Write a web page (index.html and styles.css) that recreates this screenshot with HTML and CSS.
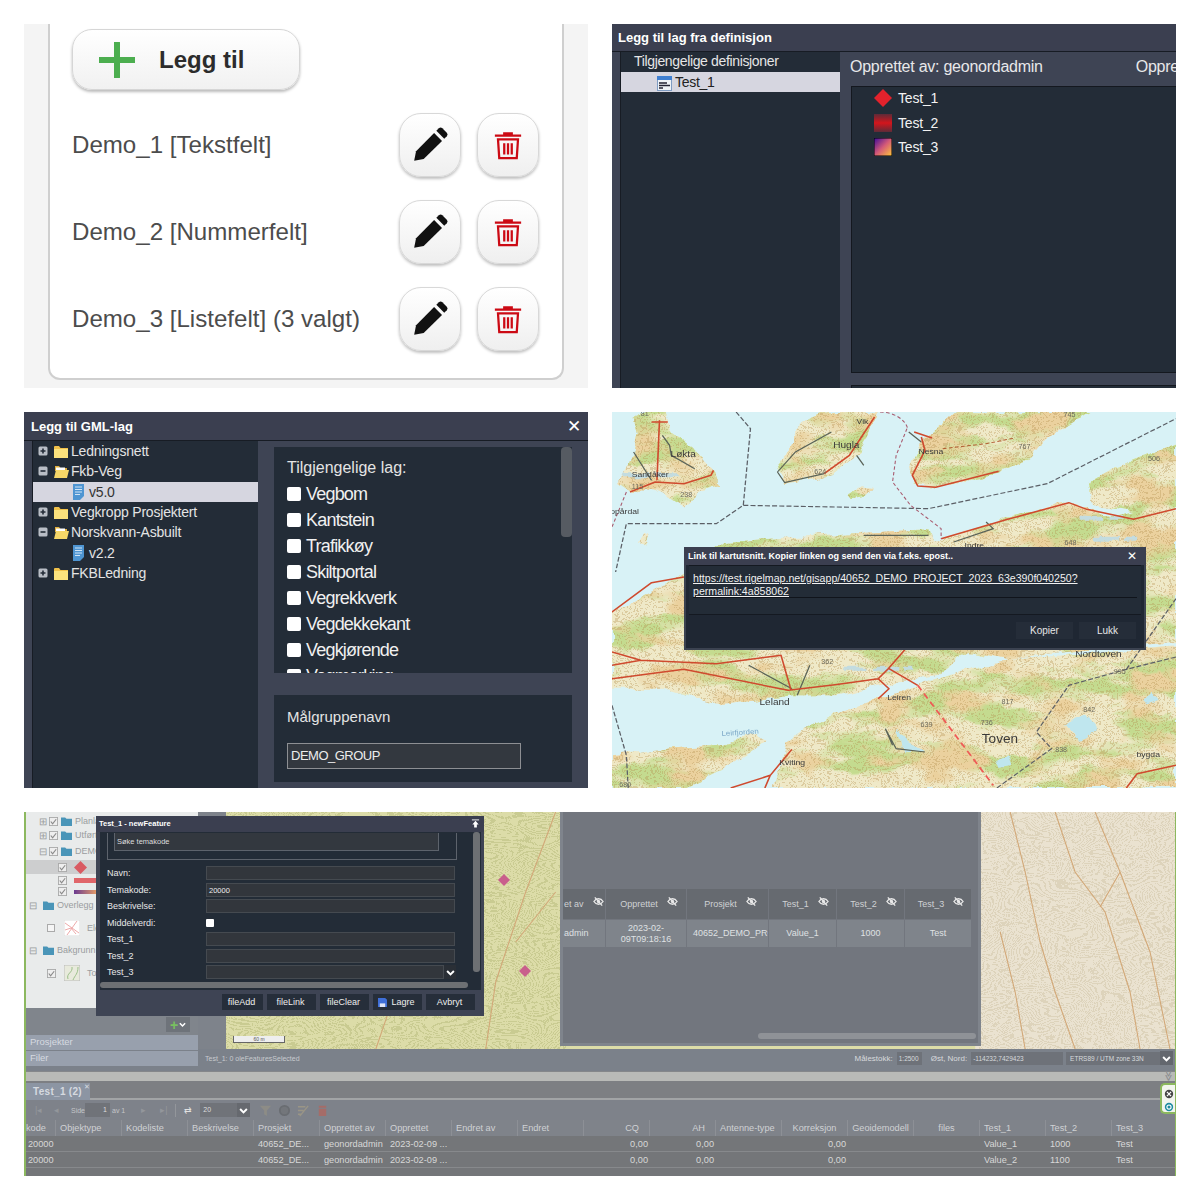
FILE: index.html
```html
<!DOCTYPE html>
<html lang="no">
<head>
<meta charset="utf-8">
<title>Rigelmap</title>
<link rel="stylesheet" href="styles.css">
</head>
<body>
<svg class="defs" aria-hidden="true">
  <symbol id="pencil" viewBox="0 0 24 24"><path d="M2 22l1.200-6L14.600 4.400l5 5L8 20.800z"/><path d="M16 3l1.600-1.600a1.600 1.600 0 0 1 2.200 0l2.800 2.800a1.600 1.600 0 0 1 0 2.200L21 8z"/></symbol>
  <symbol id="trash" viewBox="0 0 24 24"><path d="M1.500 4.500h21M9 4V2.600h6V4M4 7.500h16l-1 15H5zM9 10.500v9M12 10.500v9M15 10.500v9" fill="none" stroke="currentColor" stroke-width="1.800"/></symbol>
  <symbol id="folder" viewBox="0 0 16 16"><path d="M1 4a1 1 0 0 1 1-1h4l1.500 2H15v10H1z" fill="#f0c14a"/><path d="M1 6h14v9H1z" fill="#fbe27d"/></symbol>
  <symbol id="folder-open" viewBox="0 0 16 16"><path d="M2 3h4l1.500 2H14v3H2z" fill="#e0ae3c"/><path d="M3 4.500h9v3H3z" fill="#fff"/><path d="M3 7h13l-2 8H1z" fill="#f6d768"/></symbol>
  <symbol id="doc" viewBox="0 0 12 16"><path d="M0 0h11v12l-4 4H0z" fill="#4e95d2"/><path d="M2 3h7M2 5.500h7M2 8h7M2 10.500h5" stroke="#cfe4f6" stroke-width="1"/></symbol>
  <symbol id="plusbox" viewBox="0 0 10 10"><rect x=".5" y=".5" width="9" height="9" rx="1.500" fill="#b9bec6"/><path d="M2.500 5h5M5 2.500v5" stroke="#232c37" stroke-width="1.600"/></symbol>
  <symbol id="minusbox" viewBox="0 0 10 10"><rect x=".5" y=".5" width="9" height="9" rx="1.500" fill="#b9bec6"/><path d="M2.500 5h5" stroke="#232c37" stroke-width="1.600"/></symbol>
  <symbol id="eyeoff" viewBox="0 0 12 12"><path d="M1 6c2.500-4 7.500-4 10 0-2.500 4-7.500 4-10 0z" fill="none" stroke="#e8e8e8" stroke-width="1.500"/><circle cx="6" cy="6" r="1.800" fill="#e8e8e8"/><path d="M2 1.500l8 9" stroke="#e8e8e8" stroke-width="1.500"/></symbol>
  <symbol id="chev" viewBox="0 0 12 12"><path d="M1.500 4L6 8.500 10.500 4" fill="none" stroke="#fff" stroke-width="2.600"/></symbol>
  <symbol id="tfolder" viewBox="0 0 12 12"><path d="M0 3V1.500h4.500L6 3h6v8H0z" fill="#4a95b8"/></symbol>
  <symbol id="chk" viewBox="0 0 10 10"><rect x=".5" y=".5" width="9" height="9" fill="#eee" stroke="#a9a9a9"/><path d="M2 5l2 2.500L8 2.500" fill="none" stroke="#8a8a8a" stroke-width="1.300"/></symbol>
</svg>

<main class="sheet">

  <section class="shot form-shot">
    <div class="card">
      <button class="add-btn">
        <svg class="add-icon" viewBox="0 0 36 36"><path d="M18 1v34M1 18h34" stroke="#4cae4f" stroke-width="6" stroke-linecap="round"/></svg>
        <span>Legg til</span>
      </button>
      <ul class="field-list">
        <li class="field-row"><span class="field-name">Demo_1 [Tekstfelt]</span><button class="round-btn"><svg class="ic-pencil"><use href="#pencil"/></svg></button><button class="round-btn"><svg class="ic-trash"><use href="#trash"/></svg></button></li>
        <li class="field-row"><span class="field-name">Demo_2 [Nummerfelt]</span><button class="round-btn"><svg class="ic-pencil"><use href="#pencil"/></svg></button><button class="round-btn"><svg class="ic-trash"><use href="#trash"/></svg></button></li>
        <li class="field-row"><span class="field-name">Demo_3 [Listefelt] (3 valgt)</span><button class="round-btn"><svg class="ic-pencil"><use href="#pencil"/></svg></button><button class="round-btn"><svg class="ic-trash"><use href="#trash"/></svg></button></li>
      </ul>
    </div>
  </section>

  <section class="shot dark">
    <header class="titlebar tb-def">Legg til lag fra definisjon</header>
    <div class="def-body">
      <div class="def-tree">
        <div class="def-head">Tilgjengelige definisjoner</div>
        <div class="def-sel">
          <svg class="ic-form" viewBox="0 0 15 15"><rect x=".5" y=".5" width="14" height="14" fill="#eef2f7" stroke="#7f9cc2"/><rect width="15" height="4" fill="#3f7fd0"/><path d="M2 7h8M2 9.500h11M2 12h4" stroke="#223" stroke-width="1.300"/></svg>
          <span>Test_1</span>
        </div>
      </div>
      <div class="def-main">
        <div class="def-meta"><span>Opprettet av: geonordadmin</span><span class="def-meta2">Opprettet</span></div>
        <div class="def-list">
          <div class="def-item"><svg class="swatch" viewBox="0 0 18 18"><path d="M9 0l9 9-9 9-9-9z" fill="#e3222c"/></svg><span>Test_1</span></div>
          <div class="def-item"><svg class="swatch" viewBox="0 0 18 18"><defs><linearGradient id="g2" x2="0" y2="1"><stop offset="0" stop-color="#5d2b38"/><stop offset=".5" stop-color="#d4151c"/><stop offset="1" stop-color="#5d2b38"/></linearGradient></defs><rect width="18" height="18" fill="url(#g2)"/></svg><span>Test_2</span></div>
          <div class="def-item"><svg class="swatch" viewBox="0 0 18 18"><defs><linearGradient id="g3" x2="1" y2="1"><stop offset="0" stop-color="#3a0a9a"/><stop offset=".5" stop-color="#d45a78"/><stop offset="1" stop-color="#ffc83a"/></linearGradient></defs><rect width="18" height="18" fill="url(#g3)" stroke="#000"/></svg><span>Test_3</span></div>
        </div>
        <div class="def-list2"></div>
      </div>
    </div>
  </section>

  <section class="shot dark gml">
    <header class="titlebar tb-gml"><span>Legg til GML-lag</span><span class="close">✕</span></header>
    <div class="gml-body">
      <div class="gml-tree">
        <div class="g-row"><svg class="g-exp"><use href="#plusbox"/></svg><svg class="g-fold"><use href="#folder"/></svg>Ledningsnett</div>
        <div class="g-row"><svg class="g-exp"><use href="#minusbox"/></svg><svg class="g-fold"><use href="#folder-open"/></svg>Fkb-Veg</div>
        <div class="g-row g-leaf g-sel"><svg class="g-doc"><use href="#doc"/></svg>v5.0</div>
        <div class="g-row"><svg class="g-exp"><use href="#plusbox"/></svg><svg class="g-fold"><use href="#folder"/></svg>Vegkropp Prosjektert</div>
        <div class="g-row"><svg class="g-exp"><use href="#minusbox"/></svg><svg class="g-fold"><use href="#folder-open"/></svg>Norskvann-Asbuilt</div>
        <div class="g-row g-leaf"><svg class="g-doc"><use href="#doc"/></svg>v2.2</div>
        <div class="g-row"><svg class="g-exp"><use href="#plusbox"/></svg><svg class="g-fold"><use href="#folder"/></svg>FKBLedning</div>
      </div>
      <div class="gml-right">
        <div class="layers">
          <div class="layers-thumb"></div>
          <div class="layers-title">Tilgjengelige lag:</div>
          <label class="layer"><i class="cb"></i>Vegbom</label>
          <label class="layer"><i class="cb"></i>Kantstein</label>
          <label class="layer"><i class="cb"></i>Trafikkøy</label>
          <label class="layer"><i class="cb"></i>Skiltportal</label>
          <label class="layer"><i class="cb"></i>Vegrekkverk</label>
          <label class="layer"><i class="cb"></i>Vegdekkekant</label>
          <label class="layer"><i class="cb"></i>Vegkjørende</label>
          <label class="layer"><i class="cb"></i>Vegmerking</label>
        </div>
        <div class="target">
          <div class="target-label">Målgruppenavn</div>
          <div class="target-input">DEMO_GROUP</div>
        </div>
      </div>
    </div>
  </section>

  <section class="shot map-shot">
    <svg class="topo" viewBox="0 0 1568 1128" preserveAspectRatio="none">
      <defs>
        <clipPath id="land">
          <path d="M60 20L100 0H150L165 60 225 105 285 175 300 222 240 240 205 285 150 250 110 230 60 240 20 210 45 160 60 120 72 60z"/>
          <path d="M490 120L530 30 600 0H738L720 60 680 130 610 190 480 212 455 170z"/>
          <path d="M830 160L860 90 960 0H1330L1200 85 1160 140 1060 190 900 228 842 212z"/>
          <path d="M655 250L700 220 725 225 700 255 665 262z"/>
          <path d="M72 395L90 362 104 370 95 402z"/>
          <path d="M1320 215L1400 165 1568 95V265L1450 300 1340 280z"/>
          <path d="M920 385L1100 315 1270 272 1400 315 1568 265V690L1300 715 1100 745 990 720 900 790 760 815 630 850 500 850 300 880 140 830 0 830V600L200 490 310 390 600 368 880 352 890 385z"/>
          <path d="M0 1030L130 1012 300 1000 400 968 425 990 300 1080 200 1128H0z"/>
          <path d="M740 860L560 930 485 990 450 1128H1568V700L1300 725 1100 745 900 800z"/>
        </clipPath>
        <filter id="rough" x="0" y="0" width="100%" height="100%"><feTurbulence type="fractalNoise" baseFrequency=".02" numOctaves="4" seed="7"/><feDisplacementMap in="SourceGraphic" scale="26" xChannelSelector="R" yChannelSelector="G"/></filter>
        <filter id="patch-g" x="0" y="0" width="100%" height="100%" color-interpolation-filters="sRGB"><feTurbulence type="fractalNoise" baseFrequency=".005 .014" numOctaves="4" seed="11"/><feColorMatrix values="0 0 0 0 .77  0 0 0 0 .86  0 0 0 0 .56  6 0 0 0 -2.700"/></filter>
        <filter id="patch-t" x="0" y="0" width="100%" height="100%" color-interpolation-filters="sRGB"><feTurbulence type="fractalNoise" baseFrequency=".007 .012" numOctaves="4" seed="23"/><feColorMatrix values="0 0 0 0 .92  0 0 0 0 .82  0 0 0 0 .62  5 0 0 0 -2.500"/></filter>
        <filter id="iso" x="0" y="0" width="100%" height="100%" color-interpolation-filters="sRGB"><feTurbulence type="fractalNoise" baseFrequency=".007 .010" numOctaves="3" seed="5"/><feColorMatrix values="0 0 0 0 .70  0 0 0 0 .55  0 0 0 0 .30  1 0 0 0 0"/><feComponentTransfer><feFuncA type="discrete" tableValues="0 0 0 1 0 0 0 1 0 0 0 1 0 0 0 1 0 0 0 1 0 0 0 1 0 0 0 1 0 0 0 1 0 0 0 1 0 0 0 1 0 0 0 1 0 0 0 1 0 0 0 1 0 0 0 1 0 0 0 1 0 0 0 1 0 0 0 1 0 0 0 1 0 0 0 1 0 0 0 1 0 0 0 1 0 0 0 1 0 0 0 1 0 0 0 1 0 0 0 1 0 0 0 1 0 0 0 1 0 0 0 1 0 0 0 1 0 0 0 1 0 0 0 1 0 0 0 1 0 0 0 1 0 0 0 1 0 0 0 1 0 0 0 1 0 0 0 1 0 0 0 1"/></feComponentTransfer></filter>
      </defs>
      <rect width="1568" height="1128" fill="#d8f2f6"/>
      <g filter="url(#rough)"><g clip-path="url(#land)">
        <rect width="1568" height="1128" fill="#efe9c8"/>
        <rect width="1568" height="1128" filter="url(#patch-g)"/>
        <rect width="1568" height="1128" filter="url(#patch-t)"/>
        <rect width="1568" height="1128" filter="url(#iso)" opacity=".32"/>
        <path d="M1260 940l60-30 30 40-50 40zM790 950l30 40 50 30-60 0zM1070 1040l30-10 10 30-30 5zM1470 860l30-20 20 30-40 10z" fill="#bfe6ee"/>
        <path d="M30 190h160M1300 320h120M480 620l200-40M640 770h200M1340 380h120" stroke="#c3dce0" stroke-width="12" stroke-dasharray="70 16" fill="none"/>
      </g></g>
      <g fill="none" stroke="#5a6358" stroke-width="3.500">
        <path d="M460 180L510 120 610 60M460 180L480 212 590 185M680 130L700 160M825 60L860 90M140 70L160 100 165 130 230 170M60 120L110 205M1040 330L1060 350 950 390M700 370L880 370M550 760L515 850M380 760L500 830M780 1000L760 950 790 1010 870 1020"/>
      </g>
      <g fill="none" stroke="#cf4a2e" stroke-width="4.500" stroke-linejoin="round">
        <path d="M132 25L125 205M50 240L120 210 200 215 275 190 282 175M110 30H155M590 185L660 130 730 15"/>
        <path d="M860 75L870 115 835 190 850 222 900 226 1075 178M840 60L890 78"/>
        <path d="M915 380L1100 322 1270 272 1320 292 1450 322 1568 290"/>
        <path d="M0 600L110 512 200 495M0 720L80 745 290 755 470 730 497 832M0 800L200 772 490 835 620 818 740 800 768 770 825 700M740 800L770 830 740 860M770 770L850 820M0 760L80 745"/>
        <path d="M440 1090L500 1012M330 1128L440 1090 425 1128"/>
        <path d="M1430 1128L1460 1085 1568 1060"/>
      </g>
      <g fill="none" stroke="#5b5f66" stroke-width="3.500" stroke-dasharray="14 6">
        <path d="M345 0L385 50 365 280 290 335H40L10 480M365 280L880 290 1210 215 1568 20"/>
        <path d="M0 880L40 1030 45 1128"/>
        <path d="M1568 735L1430 772 1270 820 1180 960 1222 1010 1070 1128M1430 772L1568 560"/>
      </g>
      <g fill="none" stroke="#a85a6e" stroke-width="3" stroke-dasharray="10 7">
        <path d="M820 50L790 130 780 210 830 280 915 350 915 380M745 0C780 0 815 20 822 50M40 240L0 345"/>
        <path d="M920 110L1040 95 1120 78" stroke="#b05a30"/>
      </g>
      <path d="M850 820L1060 1120" fill="none" stroke="#ef5a56" stroke-width="5" stroke-dasharray="18 12"/>
      <g class="maplabels">
        <text x="680" y="36">Vik</text><text x="615" y="108" class="ml">Hugla</text><text x="163" y="136" class="ml">Løkta</text><text x="55" y="196">Sandåker</text><text x="55" y="231" class="ms">115</text><text x="190" y="256" class="ms">238</text><text x="852" y="126">Nesna</text><text x="1130" y="110" class="ms">767</text><text x="1255" y="16" class="ms">745</text><text x="1490" y="147" class="ms">506</text><text x="562" y="186" class="ms">624</text><text x="-5" y="305">opårdal</text><text x="980" y="408">Indre</text><text x="1258" y="400" class="ms">648</text><text x="582" y="756" class="ms">362</text><text x="1288" y="735" class="ml">Nordtoven</text><text x="1395" y="785" class="ms">995</text><text x="410" y="878" class="ml">Leland</text><text x="765" y="864">Leiren</text><text x="1083" y="877" class="ms">817</text><text x="1310" y="900" class="ms">842</text><text x="858" y="944" class="ms">639</text><text x="1025" y="940" class="ms">736</text><text x="1028" y="992" class="mx">Toven</text><text x="1232" y="1021" class="ms">838</text><text x="1458" y="1034">bygda</text><text x="305" y="972" class="mb" transform="rotate(-4 305 972)">Leirfjorden</text><text x="465" y="1060">Kviting</text><text x="20" y="1126" class="ms">680</text><text x="80" y="12" class="ms">81</text>
      </g>
    </svg>
    <div class="link-dlg">
      <div class="ld-title"><span>Link til kartutsnitt. Kopier linken og send den via f.eks. epost..</span><span class="ld-x">✕</span></div>
      <div class="ld-body">
        <a class="ld-link">https://test.rigelmap.net/gisapp/40652_DEMO_PROJECT_2023_63e390f040250?<br>permalink:4a858062</a>
      </div>
      <div class="ld-foot"><span class="ld-btn">Kopier</span><span class="ld-btn">Lukk</span></div>
    </div>
  </section>

  <section class="shot gis">
    <div class="gis-top">
      <aside class="side">
        <div class="side-tree">
          <div class="t a1"><i class="exp">⊞</i><svg class="ck"><use href="#chk"/></svg><svg class="tf"><use href="#tfolder"/></svg>Planlagt</div>
          <div class="t a2"><i class="exp">⊞</i><svg class="ck"><use href="#chk"/></svg><svg class="tf"><use href="#tfolder"/></svg>Utført</div>
          <div class="t a3"><i class="exp">⊟</i><svg class="ck"><use href="#chk"/></svg><svg class="tf"><use href="#tfolder"/></svg>DEMO</div>
          <div class="t a4 t-sel"><svg class="ck ck2"><use href="#chk"/></svg><svg class="sw" viewBox="0 0 12 12"><path d="M6 0l6 6-6 6-6-6z" fill="#d95a62"/></svg></div>
          <div class="t a5"><svg class="ck ck2"><use href="#chk"/></svg><i class="bar bar-r"></i></div>
          <div class="t a6"><svg class="ck ck2"><use href="#chk"/></svg><i class="bar bar-g"></i></div>
          <div class="t a7"><i class="exp exp0">⊟</i><svg class="tf"><use href="#tfolder"/></svg>Overlegg</div>
          <div class="t a8"><i class="box"></i><svg class="thumb" viewBox="0 0 16 16"><rect width="16" height="16" fill="#fff" stroke="#ddd"/><path d="M1 3l14 10M3 15L13 1M1 10l6-2 5 6" stroke="#eaa" fill="none"/></svg>Elementer</div>
          <div class="t a9"><i class="exp exp0">⊟</i><svg class="tf"><use href="#tfolder"/></svg>Bakgrunn</div>
          <div class="t a10"><svg class="ck ck3"><use href="#chk"/></svg><svg class="thumb" viewBox="0 0 16 16"><rect width="16" height="16" fill="#e8eadc" stroke="#bbb"/><path d="M4 14C2 8 9 8 8 2M9 15c2-5 5-6 5-13" stroke="#9cc08a" fill="none"/></svg>Topo</div>
        </div>
        <div class="side-tool"><span class="add-mini"><b>+</b><svg><use href="#chev"/></svg></span></div>
        <div class="acc">Prosjekter</div>
        <div class="acc">Filer</div>
      </aside>
      <div class="gis-right">
        <div class="gis-stage">
          <div class="gutter"></div>
          <div class="terrain">
            <svg class="terrain-svg" viewBox="0 0 950 237" preserveAspectRatio="none">
              <defs>
                <filter id="iso-a" x="0" y="0" width="100%" height="100%" color-interpolation-filters="sRGB"><feTurbulence type="fractalNoise" baseFrequency=".01 .03" numOctaves="2" seed="9"/><feColorMatrix values="0 0 0 0 .68  0 0 0 0 .70  0 0 0 0 .44  1 0 0 0 0"/><feComponentTransfer><feFuncA type="discrete" tableValues="0 0 1 0 0 1 0 0 1 0 0 1 0 0 1 0 0 1 0 0 1 0 0 1 0 0 1 0 0 1 0 0 1 0 0 1 0 0 1 0 0 1 0 0 1 0 0 1 0 0 1 0 0 1 0 0 1 0 0 1 0 0 1 0 0 1 0 0 1 0 0 1 0 0 1 0 0 1 0 0 1 0 0 1 0 0 1 0 0 1 0 0 1 0 0 1 0 0 1 0 0 1 0 0 1 0 0 1 0 0 1 0 0 1 0 0 1 0 0 1"/></feComponentTransfer></filter>
                <filter id="iso-b" x="0" y="0" width="100%" height="100%" color-interpolation-filters="sRGB"><feTurbulence type="fractalNoise" baseFrequency=".014 .03" numOctaves="2" seed="14"/><feColorMatrix values="0 0 0 0 .80  0 0 0 0 .74  0 0 0 0 .62  1 0 0 0 0"/><feComponentTransfer><feFuncA type="discrete" tableValues="0 0 1 0 0 1 0 0 1 0 0 1 0 0 1 0 0 1 0 0 1 0 0 1 0 0 1 0 0 1 0 0 1 0 0 1 0 0 1 0 0 1 0 0 1 0 0 1 0 0 1 0 0 1 0 0 1 0 0 1 0 0 1 0 0 1 0 0 1 0 0 1 0 0 1 0 0 1 0 0 1 0 0 1 0 0 1 0 0 1 0 0 1 0 0 1 0 0 1 0 0 1 0 0 1 0 0 1 0 0 1 0 0 1 0 0 1 0 0 1"/></feComponentTransfer></filter>
              </defs>
              <rect width="340" height="237" fill="#dcdca8"/>
              <rect width="340" height="237" filter="url(#iso-a)" opacity=".4"/>
              <rect x="750" width="200" height="237" fill="#eae2d0"/>
              <rect x="750" width="200" height="237" filter="url(#iso-b)" opacity=".4"/>
              <g fill="none" stroke="#d2a878" stroke-width="1.100">
                <path d="M250 40L190 120 150 237M330 0L300 80 270 170 260 237M290 130L330 80"/>
                <path d="M785 0L800 60 815 130 830 180 850 237M830 0L850 60 880 100 905 180 915 237M870 0L895 60 925 140 945 237M775 120L790 180 800 237M895 60L875 95"/>
              </g>
            </svg>
            <svg class="pin pin-a" viewBox="0 0 12 12"><path d="M6 0l6 6-6 6-6-6z" fill="#c95f8c"/></svg>
            <svg class="pin pin-b" viewBox="0 0 12 12"><path d="M6 0l6 6-6 6-6-6z" fill="#c95f8c"/></svg>
            <div class="scale">60 m</div>
            <div class="grid-win">
              <div class="gw-table">
                <div class="gw-h gw-c0">et av<svg><use href="#eyeoff"/></svg></div>
                <div class="gw-h">Opprettet<svg><use href="#eyeoff"/></svg></div>
                <div class="gw-h">Prosjekt<svg><use href="#eyeoff"/></svg></div>
                <div class="gw-h">Test_1<svg><use href="#eyeoff"/></svg></div>
                <div class="gw-h">Test_2<svg><use href="#eyeoff"/></svg></div>
                <div class="gw-h">Test_3<svg><use href="#eyeoff"/></svg></div>
                <div class="gw-d gw-c0">admin</div>
                <div class="gw-d">2023-02-<br>09T09:18:16</div>
                <div class="gw-d gw-clip">40652_DEMO_PROJECT</div>
                <div class="gw-d">Value_1</div>
                <div class="gw-d">1000</div>
                <div class="gw-d">Test</div>
              </div>
              <div class="gw-scroll"></div>
            </div>
          </div>
        </div>
        <div class="status">
          <span class="st-left">Test_1: 0 oleFeaturesSelected</span>
          <span class="st-lbl">Målestokk:</span><span class="st-in st-w1">1:2500</span>
          <span class="st-lbl st-gap">Øst, Nord:</span><span class="st-in st-w2">-114232,7429423</span>
          <span class="st-in st-w3">ETRS89 / UTM zone 33N</span><span class="st-chev"><svg><use href="#chev"/></svg></span>
        </div>
      </div>
    </div>
    <div class="splitter"><span class="split-mark">≫</span></div>
    <div class="tabs"><span class="tab">Test_1 (2)<sup>✕</sup></span></div>
    <div class="toolbar">
      <span class="tbi i1">|◂</span><span class="tbi i2">◂</span><span class="tbt">Side</span><span class="tb-in">1</span><span class="tbt">av 1</span><span class="tbi i3">▸</span><span class="tbi i4">▸|</span><i class="tb-sep"></i><span class="tbi i5">⇄</span><span class="tb-sel">20</span><span class="tb-chev"><svg><use href="#chev"/></svg></span>
      <svg class="tb-ic" viewBox="0 0 14 14"><path d="M1 2h12L8.500 7v6l-3-2V7z" fill="#8d8c86"/></svg>
      <svg class="tb-ic" viewBox="0 0 14 14"><circle cx="7" cy="7" r="5" fill="#73767b" stroke="#6a6d72" stroke-width="2"/></svg>
      <svg class="tb-ic" viewBox="0 0 14 14"><path d="M1 3h8M1 7h6M1 11h4M3 13L12 2" stroke="#9a9586" stroke-width="1.500" fill="none"/></svg>
      <svg class="tb-ic" viewBox="0 0 14 14"><path d="M3 2h8v2H3zM3 5h8v8H3z" fill="#a56c68"/></svg>
    </div>
    <div class="attr">
      <div class="ah ah-first">kode</div><div class="ah">Objektype</div><div class="ah">Kodeliste</div><div class="ah">Beskrivelse</div><div class="ah">Prosjekt</div><div class="ah">Opprettet av</div><div class="ah">Opprettet</div><div class="ah">Endret av</div><div class="ah">Endret</div><div class="ah ah-r">CQ</div><div class="ah ah-r">AH</div><div class="ah">Antenne-type</div><div class="ah ah-c">Korreksjon</div><div class="ah ah-c">Geoidemodell</div><div class="ah ah-c">files</div><div class="ah">Test_1</div><div class="ah">Test_2</div><div class="ah">Test_3</div>
      <div class="ad ad-first">20000</div><div class="ad"></div><div class="ad"></div><div class="ad"></div><div class="ad">40652_DE...</div><div class="ad">geonordadmin</div><div class="ad">2023-02-09 ...</div><div class="ad"></div><div class="ad"></div><div class="ad ad-r">0,00</div><div class="ad ad-r">0,00</div><div class="ad"></div><div class="ad ad-r">0,00</div><div class="ad"></div><div class="ad"></div><div class="ad">Value_1</div><div class="ad">1000</div><div class="ad">Test</div>
      <div class="ad ad-first">20000</div><div class="ad"></div><div class="ad"></div><div class="ad"></div><div class="ad">40652_DE...</div><div class="ad">geonordadmin</div><div class="ad">2023-02-09 ...</div><div class="ad"></div><div class="ad"></div><div class="ad ad-r">0,00</div><div class="ad ad-r">0,00</div><div class="ad"></div><div class="ad ad-r">0,00</div><div class="ad"></div><div class="ad"></div><div class="ad">Value_2</div><div class="ad">1100</div><div class="ad">Test</div>
    </div>
    <div class="side-pill">
      <svg viewBox="0 0 12 12"><circle cx="6" cy="6" r="5" fill="#444"/><path d="M3.500 3.500l5 5M8.500 3.500l-5 5" stroke="#fff" stroke-width="1.500"/></svg>
      <svg viewBox="0 0 12 12"><circle cx="6" cy="6" r="5" fill="#1d8ba0"/><circle cx="6" cy="6" r="2.500" fill="none" stroke="#fff" stroke-width="1.300"/></svg>
    </div>

    <div class="feat-win">
      <div class="fw-title"><span>Test_1 - newFeature</span><svg class="fw-pin" viewBox="0 0 10 10"><path d="M1 1h8" stroke="#fff" stroke-width="1"/><path d="M5 2L8.500 6H6.500V9.500H3.500V6H1.500z" fill="#fff"/></svg></div>
      <div class="fw-body">
        <div class="fw-content">
          <div class="fw-fieldset"><div class="fw-search">Søke temakode</div></div>
          <div class="fw-row"><label>Navn:</label><span class="fw-in"></span></div>
          <div class="fw-row"><label>Temakode:</label><span class="fw-in">20000</span></div>
          <div class="fw-row"><label>Beskrivelse:</label><span class="fw-in"></span></div>
          <div class="fw-row"><label>Middelverdi:</label><i class="fw-cb"></i></div>
          <div class="fw-row"><label>Test_1</label><span class="fw-in"></span></div>
          <div class="fw-row"><label>Test_2</label><span class="fw-in"></span></div>
          <div class="fw-row"><label>Test_3</label><span class="fw-in fw-combo"></span><span class="fw-chev"><svg><use href="#chev"/></svg></span></div>
          <div class="fw-hscroll"></div>
        </div>
        <div class="fw-vscroll"><i></i></div>
      </div>
      <div class="fw-foot">
        <span class="fw-btn b1">fileAdd</span><span class="fw-btn b2">fileLink</span><span class="fw-btn b2">fileClear</span>
        <span class="fw-btn b2 b-save"><svg viewBox="0 0 10 10"><path d="M0 0h8l2 2v8H0z" fill="#3f6fd8"/><path d="M2 6h6v4H2z" fill="#dfe6f7"/></svg>Lagre</span><span class="fw-btn b2">Avbryt</span>
      </div>
    </div>
  </section>
</main>
</body>
</html>
```

FILE: styles.css
```css
* { box-sizing: border-box; }
html, body { margin: 0; background: #fff; }
body { font-family: "Liberation Sans", Arial, sans-serif; }
.defs { position: absolute; width: 0; height: 0; }
button { font-family: inherit; padding: 0; }
ul { list-style: none; margin: 0; padding: 0; }

.sheet {
  display: grid;
  grid-template-columns: 564px 564px;
  grid-template-rows: 364px 376px 364px;
  gap: 24px;
  padding: 24px;
}
.shot { overflow: hidden; position: relative; }

/* panel 1 */
.form-shot { background: #f4f4f4; padding-left: 24px; }
.card {
  width: 516px; height: 356px; background: #fff;
  border: 2px solid #cfcfcf; border-top: 0;
  border-radius: 0 0 12px 12px;
  padding: 5px 23px 0 22px;
}
.add-btn {
  display: flex; align-items: center; width: 228px; height: 61px;
  background: linear-gradient(#fff, #f1f1f1);
  border: 1px solid #d6d6d6; border-radius: 20px;
  box-shadow: 0 2px 3px #bbb;
  padding-left: 26px; gap: 24px;
  font-size: 24px; font-weight: 700; color: #2c2c2c;
}
.add-icon { width: 36px; height: 36px; }
.field-list { margin-top: 23px; display: flex; flex-direction: column; gap: 23px; }
.field-row { display: flex; align-items: center; height: 64px; gap: 16px; }
.field-name { flex: 1; font-size: 24.100px; color: #4c4c4c; }
.round-btn {
  display: flex; align-items: center; justify-content: center;
  width: 62px; height: 64px;
  background: linear-gradient(#fff, #efefef);
  border: 1px solid #d8d8d8; border-radius: 22px;
  box-shadow: 0 2px 3px #c0c0c0;
}
.ic-pencil { width: 38px; height: 38px; fill: #111; }
.ic-trash { width: 30px; height: 34px; color: #cc0a14; }

/* dark dialogs */
.dark { background: #3e4454; color: #e8e8ea; }
.titlebar { display: flex; align-items: center; background: #3b3f50; color: #fff; font-weight: 700; font-size: 13px; }
.tb-def { height: 28px; padding-left: 6px; border-bottom: 1px solid #171c24; }
.def-body { display: flex; height: 336px; padding-left: 8px; }
.def-tree { width: 220px; background: #232c37; border-left: 1px solid #171c24; }
.def-head { height: 20px; line-height: 18px; padding-left: 13px; font-size: 14px; letter-spacing: -.35px; color: #e6e6e6; }
.def-sel { display: flex; align-items: center; height: 20px; background: #d6d6e0; color: #222; font-size: 14px; letter-spacing: -.3px; padding-left: 36px; gap: 3px; }
.ic-form { width: 15px; height: 15px; margin-top: 2px; }
.def-main { flex: 1; min-width: 0; background: #3e4454; padding-left: 10px; overflow: hidden; }
.def-meta { display: flex; height: 34px; line-height: 30px; font-size: 16px; letter-spacing: -.25px; color: #e8e8ea; white-space: nowrap; }
.def-meta2 { margin-left: 93px; }
.def-list { height: 287px; margin-left: 1px; margin-right: -4px; background: #232c37; border: 1px solid #14181f; padding-left: 22px; }
.def-item { display: flex; align-items: center; height: 24.500px; font-size: 14px; letter-spacing: -.2px; color: #f2f2f2; gap: 6px; }
.def-item:first-child { margin-top: -1px; }
.swatch { width: 18px; height: 18px; }
.def-list2 { height: 20px; margin-top: 12px; margin-left: 1px; margin-right: -4px; background: #232c37; border: 1px solid #14181f; }

.tb-gml { justify-content: space-between; height: 29px; padding: 0 7px; border-bottom: 1px solid #171c24; }
.close { font-size: 17px; font-weight: 400; }
.gml-body { display: flex; height: 347px; padding-left: 8px; }
.gml-tree { width: 226px; background: #232c37; border-left: 1px solid #171c24; font-size: 14px; }
.g-row { display: flex; align-items: center; height: 20.300px; padding-left: 5px; color: #e4e4e4; letter-spacing: -.2px; white-space: nowrap; }
.g-exp { width: 10px; height: 10px; margin-right: 5px; }
.g-fold { width: 16px; height: 16px; margin-right: 2px; flex: none; }
.g-leaf { padding-left: 40px; }
.g-doc { width: 12px; height: 16px; margin-right: 4px; }
.g-sel { background: #d6d6e0; color: #333; }
.gml-right { flex: 1; padding: 6px 16px 0; }
.layers { position: relative; height: 226px; background: #232c37; overflow: hidden; padding: 10px 13px 0; }
.layers-thumb { position: absolute; right: 0; top: 0; width: 11px; height: 90px; background: #565b62; border-radius: 4px; }
.layers-title { font-size: 16px; height: 24px; line-height: 22px; color: #e4e4e4; }
.layer { display: flex; align-items: center; height: 26px; font-size: 18px; color: #f0f0f0; gap: 5px; letter-spacing: -.8px; }
.cb { width: 14px; height: 14px; background: #fff; border-radius: 2px; flex: none; }
.target { height: 87px; margin-top: 22px; background: #232c37; padding: 12px 13px; }
.target-label { font-size: 15px; line-height: 20px; color: #e4e4e4; }
.target-input { width: 234px; height: 26px; margin-top: 16px; padding-left: 3px; line-height: 24px; background: #33383f; border: 1px solid #8d8f93; font-size: 13px; letter-spacing: -.5px; color: #ececec; }

/* map dialog */
.map-shot { background: #d8f2f6; }
.topo { display: block; width: 564px; height: 376px; filter: blur(.4px); }
.maplabels text { font: 24px "Liberation Sans", sans-serif; fill: #3a3a3a; }
.maplabels .ms { font-size: 20px; fill: #6c6a5c; }
.maplabels .ml { font-size: 28px; }
.maplabels .mx { font-size: 38px; }
.maplabels .mb { font-size: 22px; fill: #7ba7c7; }
.link-dlg { position: absolute; left: 72px; top: 135px; width: 462px; height: 103px; background: #1f2733; border: 2px solid #3b4250; border-top: 0; color: #fff; }
.ld-title { display: flex; justify-content: space-between; align-items: center; height: 18px; background: #3b3f50; margin: 0 -2px; padding: 0 4px; font-size: 9px; font-weight: 700; }
.ld-x { font-size: 12px; font-weight: 400; padding-right: 5px; }
.ld-body { height: 50px; margin: 0 3px; padding: 6px 4px; background: #232c37; border-top: 1px solid #141921; border-bottom: 1px solid #141921; }
.ld-link { display: block; font-size: 10.600px; line-height: 13px; color: #f0f0f0; text-decoration: underline; height: 26px; border-bottom: 1px solid #10141b; width: 100%; white-space: nowrap; }
.ld-foot { display: flex; justify-content: flex-end; gap: 6px; padding: 7px 8px 0; }
.ld-btn { display: flex; align-items: center; justify-content: center; width: 57px; height: 17px; background: #252d39; font-size: 10px; color: #e6e6e6; }

/* gis */
.gis { grid-column: 1 / -1; display: flex; flex-direction: column; background: #7b818a; border-left: 2px solid #8cb85f; border-right: 1px solid #8cb85f; }
.gis-top { display: flex; height: 259px; }
.side { width: 172px; flex: none; display: flex; flex-direction: column; }
.side-tree { height: 196px; background: #e9ebeb; padding-top: 2px; color: #9a9da0; font-size: 9px; }
.t { display: flex; align-items: center; height: 14px; white-space: nowrap; }
.a1, .a2, .a3 { padding-left: 13px; }
.a3 { margin-top: 2px; }
.a4 { margin-top: 2px; background: #cdcecf; padding-left: 32px; }
.a5 { height: 12px; padding-left: 32px; }
.a6 { height: 11px; padding-left: 32px; }
.a7 { margin-top: 1px; padding-left: 3px; }
.a8 { margin-top: 9px; padding-left: 21px; }
.a9 { margin-top: 8px; padding-left: 3px; }
.a10 { margin-top: 9px; padding-left: 21px; }
.exp { font-style: normal; font-size: 10px; width: 9px; margin-right: 1px; }
.exp0 { margin-right: 5px; }
.ck { width: 9px; height: 9px; margin-right: 3px; }
.ck2 { margin-right: 7px; }
.ck3 { margin-right: 8px; }
.tf { width: 11px; height: 11px; margin-right: 3px; }
.sw { width: 13px; height: 13px; }
.bar { display: block; width: 22px; height: 5px; }
.bar-r { background: #e0666a; }
.bar-g { height: 4px; background: linear-gradient(90deg, #6a3a90, #e39a6a); }
.box { width: 8px; height: 8px; background: #f5f5f5; border: 1px solid #aaa; margin-right: 9px; }
.thumb { width: 16px; height: 16px; margin-right: 7px; flex: none; }
.side-tool { display: flex; justify-content: flex-end; align-items: flex-end; height: 27px; background: #80858c; padding: 0 8px 3px 0; }
.add-mini { display: flex; align-items: center; justify-content: center; width: 24px; height: 15px; background: #6e737a; gap: 1px; }
.add-mini b { color: #78c060; font-size: 14px; font-weight: 700; }
.add-mini svg { width: 7px; height: 7px; }
.acc { height: 15px; line-height: 14px; margin-bottom: 1px; padding-left: 4px; background: #98a0ad; color: #d6dae0; font-size: 9.500px; }
.gis-right { flex: 1; min-width: 0; display: flex; flex-direction: column; }
.gis-stage { display: flex; height: 237px; }
.gutter { width: 28px; background: #7e838b; flex: none; }
.terrain { position: relative; flex: 1; overflow: hidden; background: #dcdca8; }
.terrain-svg { display: block; width: 100%; height: 100%; filter: blur(.3px); }
.pin { position: absolute; width: 12px; height: 12px; }
.pin-a { left: 272px; top: 62px; }
.pin-b { left: 293px; top: 153px; }
.scale { position: absolute; left: 7px; top: 224px; width: 52px; height: 7px; border: 1px solid #666; border-top: 0; background: #eee; font-size: 5px; line-height: 7px; text-align: center; color: #555; }
.grid-win { position: absolute; left: 334px; top: 0; width: 421px; height: 234px; background: #72767e; border: 3px solid #7f848c; border-top: 0; overflow: hidden; }
.gw-table { display: grid; grid-template-columns: 43px 81px 82px 68px 68px 67px; margin-top: 77px; gap: 1px 0; }
.gw-h { display: flex; align-items: center; justify-content: center; height: 30px; background: #666a70; border-right: 1px solid #72767e; color: #cfd1d4; font-size: 9px; gap: 9px; padding-left: 6px; white-space: nowrap; }
.gw-h svg { width: 11px; height: 11px; margin-top: -5px; flex: none; }
.gw-d { display: flex; align-items: center; justify-content: center; text-align: center; height: 27px; background: #7f848b; border-right: 1px solid #72767e; color: #dfe1e3; font-size: 9px; line-height: 11px; }
.gw-h.gw-c0, .gw-d.gw-c0 { justify-content: flex-start; overflow: hidden; padding-left: 1px; }
.gw-clip { justify-content: flex-start; padding-left: 6px; overflow: hidden; white-space: nowrap; }
.gw-scroll { position: absolute; right: 2px; bottom: 4px; width: 218px; height: 6px; background: #8f9297; border-radius: 3px; }
.status { display: flex; align-items: center; height: 22px; padding: 0 2px 4px 0; background: #7b818a; color: #d8dadd; font-size: 8px; white-space: nowrap; }
.st-left { width: 657px; padding-left: 7px; font-size: 7px; color: #c8cbcf; }
.st-lbl { margin-right: 4px; }
.st-gap { margin-left: 9px; }
.st-in { height: 13px; line-height: 13px; background: #6e7279; padding-left: 2px; font-size: 6.500px; }
.st-w1 { width: 25px; }
.st-w2 { width: 92px; }
.st-w3 { width: 94px; margin-left: 3px; padding-left: 4px; }
.st-chev { width: 13px; height: 14px; background: #63676e; display: flex; align-items: center; justify-content: center; }
.st-chev svg { width: 9px; height: 9px; }
.splitter { position: relative; height: 10px; background: #b9bab7; border-top: 1px solid #85878a; }
.split-mark { position: absolute; right: 1px; top: -3px; font-size: 11px; color: #8b8d90; transform: rotate(90deg); }
.tabs { height: 19px; background: #7d7f83; border-bottom: 2px solid #a2a4a6; padding-left: 0; }
.tab { display: inline-block; position: relative; width: 64px; height: 17px; padding-left: 7px; line-height: 18px; background: #8c95a3; color: #d6dae0; font-size: 10px; font-weight: 700; letter-spacing: .3px; }
.tab sup { position: absolute; right: 0; top: -5px; font-size: 7px; font-weight: 400; }
.toolbar { display: flex; align-items: center; height: 20px; background: #7e828a; color: #92959a; font-size: 7px; padding-left: 9px; white-space: nowrap; }
.tbi { font-size: 9px; width: 14px; margin-right: 5px; color: #93969b; }
.i2 { margin-right: 3px; }
.i3 { margin-left: 16px; }
.i5 { color: #e0e0e0; margin-left: 8px; }
.tbt { color: #c4c6c9; }
.tb-in { width: 25px; height: 14px; margin: 0 2px 0 0; line-height: 14px; text-align: right; padding-right: 3px; background: #707379; color: #ddd; }
.tb-sep { width: 1px; height: 13px; background: #93969b; margin-left: -4px; }
.tb-sel { width: 37px; height: 14px; line-height: 14px; padding-left: 3px; background: #707379; color: #ddd; margin-left: -3px; }
.tb-chev { display: flex; align-items: center; justify-content: center; width: 13px; height: 14px; background: #66696f; margin-right: 3px; }
.tb-chev svg { width: 9px; height: 9px; }
.tb-ic { width: 13px; height: 13px; margin-left: 6px; }
.attr { display: grid; grid-template-columns: 30px repeat(17, 66px); font-size: 9.200px; white-space: nowrap; overflow: hidden; flex: 1; background: #747679; align-content: start; }
.ah { height: 16px; line-height: 16px; padding-left: 4px; background: #7f838a; color: #cfd1d4; border-right: 1px solid #8d9096; overflow: hidden; }
.ah-first { padding-left: 0; }
.ah-r { text-align: right; padding-right: 10px; }
.ah-c { text-align: center; padding-left: 0; }
.ad { height: 16px; line-height: 17px; padding-left: 4px; background: #747679; color: #d8d8d8; border-bottom: 1px solid #87898c; overflow: hidden; }
.ad-first { padding-left: 2px; }
.ad-r { text-align: right; padding-right: 2px; }
.side-pill { position: absolute; right: 0; top: 271px; display: flex; flex-direction: column; align-items: center; gap: 3px; width: 15px; height: 31px; padding-top: 4px; background: #f2f5ee; border: 2px solid #8cb85f; border-right: 0; border-radius: 5px 0 0 5px; }
.side-pill svg { width: 10px; height: 10px; }

.feat-win { position: absolute; left: 70px; top: 4px; width: 388px; height: 200px; background: #3e4454; color: #e8e8e8; }
.fw-title { display: flex; justify-content: space-between; align-items: center; height: 16px; padding: 0 4px 1px 3px; background: #3b3f50; font-size: 7.500px; font-weight: 700; color: #fff; }
.fw-pin { width: 9px; height: 9px; }
.fw-body { display: flex; height: 158px; margin-left: 4px; margin-right: 3px; background: #232c37; }
.fw-content { position: relative; flex: 1; padding: 0 0 0 7px; overflow: hidden; }
.fw-fieldset { width: 350px; height: 27px; margin-bottom: 5px; border: 1px solid #5d636c; border-top: 0; padding-left: 6px; }
.fw-search { width: 325px; height: 18px; margin-top: 1px; padding-left: 2px; line-height: 18px; background: #33383f; border: 1px solid #5d636c; border-top: 0; font-size: 7.500px; color: #ddd; }
.fw-row { display: flex; align-items: center; height: 16.500px; font-size: 9px; }
.fw-row label { width: 99px; flex: none; }
.fw-in { width: 249px; height: 14px; padding-left: 2px; line-height: 14px; background: #32363c; border: 1px solid #454a50; font-size: 7.500px; color: #eee; }
.fw-combo { width: 238px; }
.fw-chev { display: flex; align-items: center; justify-content: center; width: 12px; height: 14px; background: #2a2f36; }
.fw-chev svg { width: 9px; height: 9px; }
.fw-cb { width: 8px; height: 8px; background: #fff; border-radius: 1px; }
.fw-hscroll { position: absolute; left: 0; bottom: 2px; width: 368px; height: 6px; background: #6d7073; border-radius: 3px; }
.fw-vscroll { width: 9px; padding: 0 1px; background: #232c37; }
.fw-vscroll i { display: block; width: 7px; height: 140px; background: #6d7073; border-radius: 3px; }
.fw-foot { display: flex; justify-content: flex-end; gap: 4px; padding: 4px 9px 0 0; }
.fw-btn { display: flex; align-items: center; justify-content: center; height: 16px; background: #262e3a; font-size: 9px; gap: 4px; color: #eee; padding-right: 2px; }
.fw-btn svg { width: 9px; height: 9px; }
.b1 { width: 41px; }
.b2 { width: 49px; }
```
